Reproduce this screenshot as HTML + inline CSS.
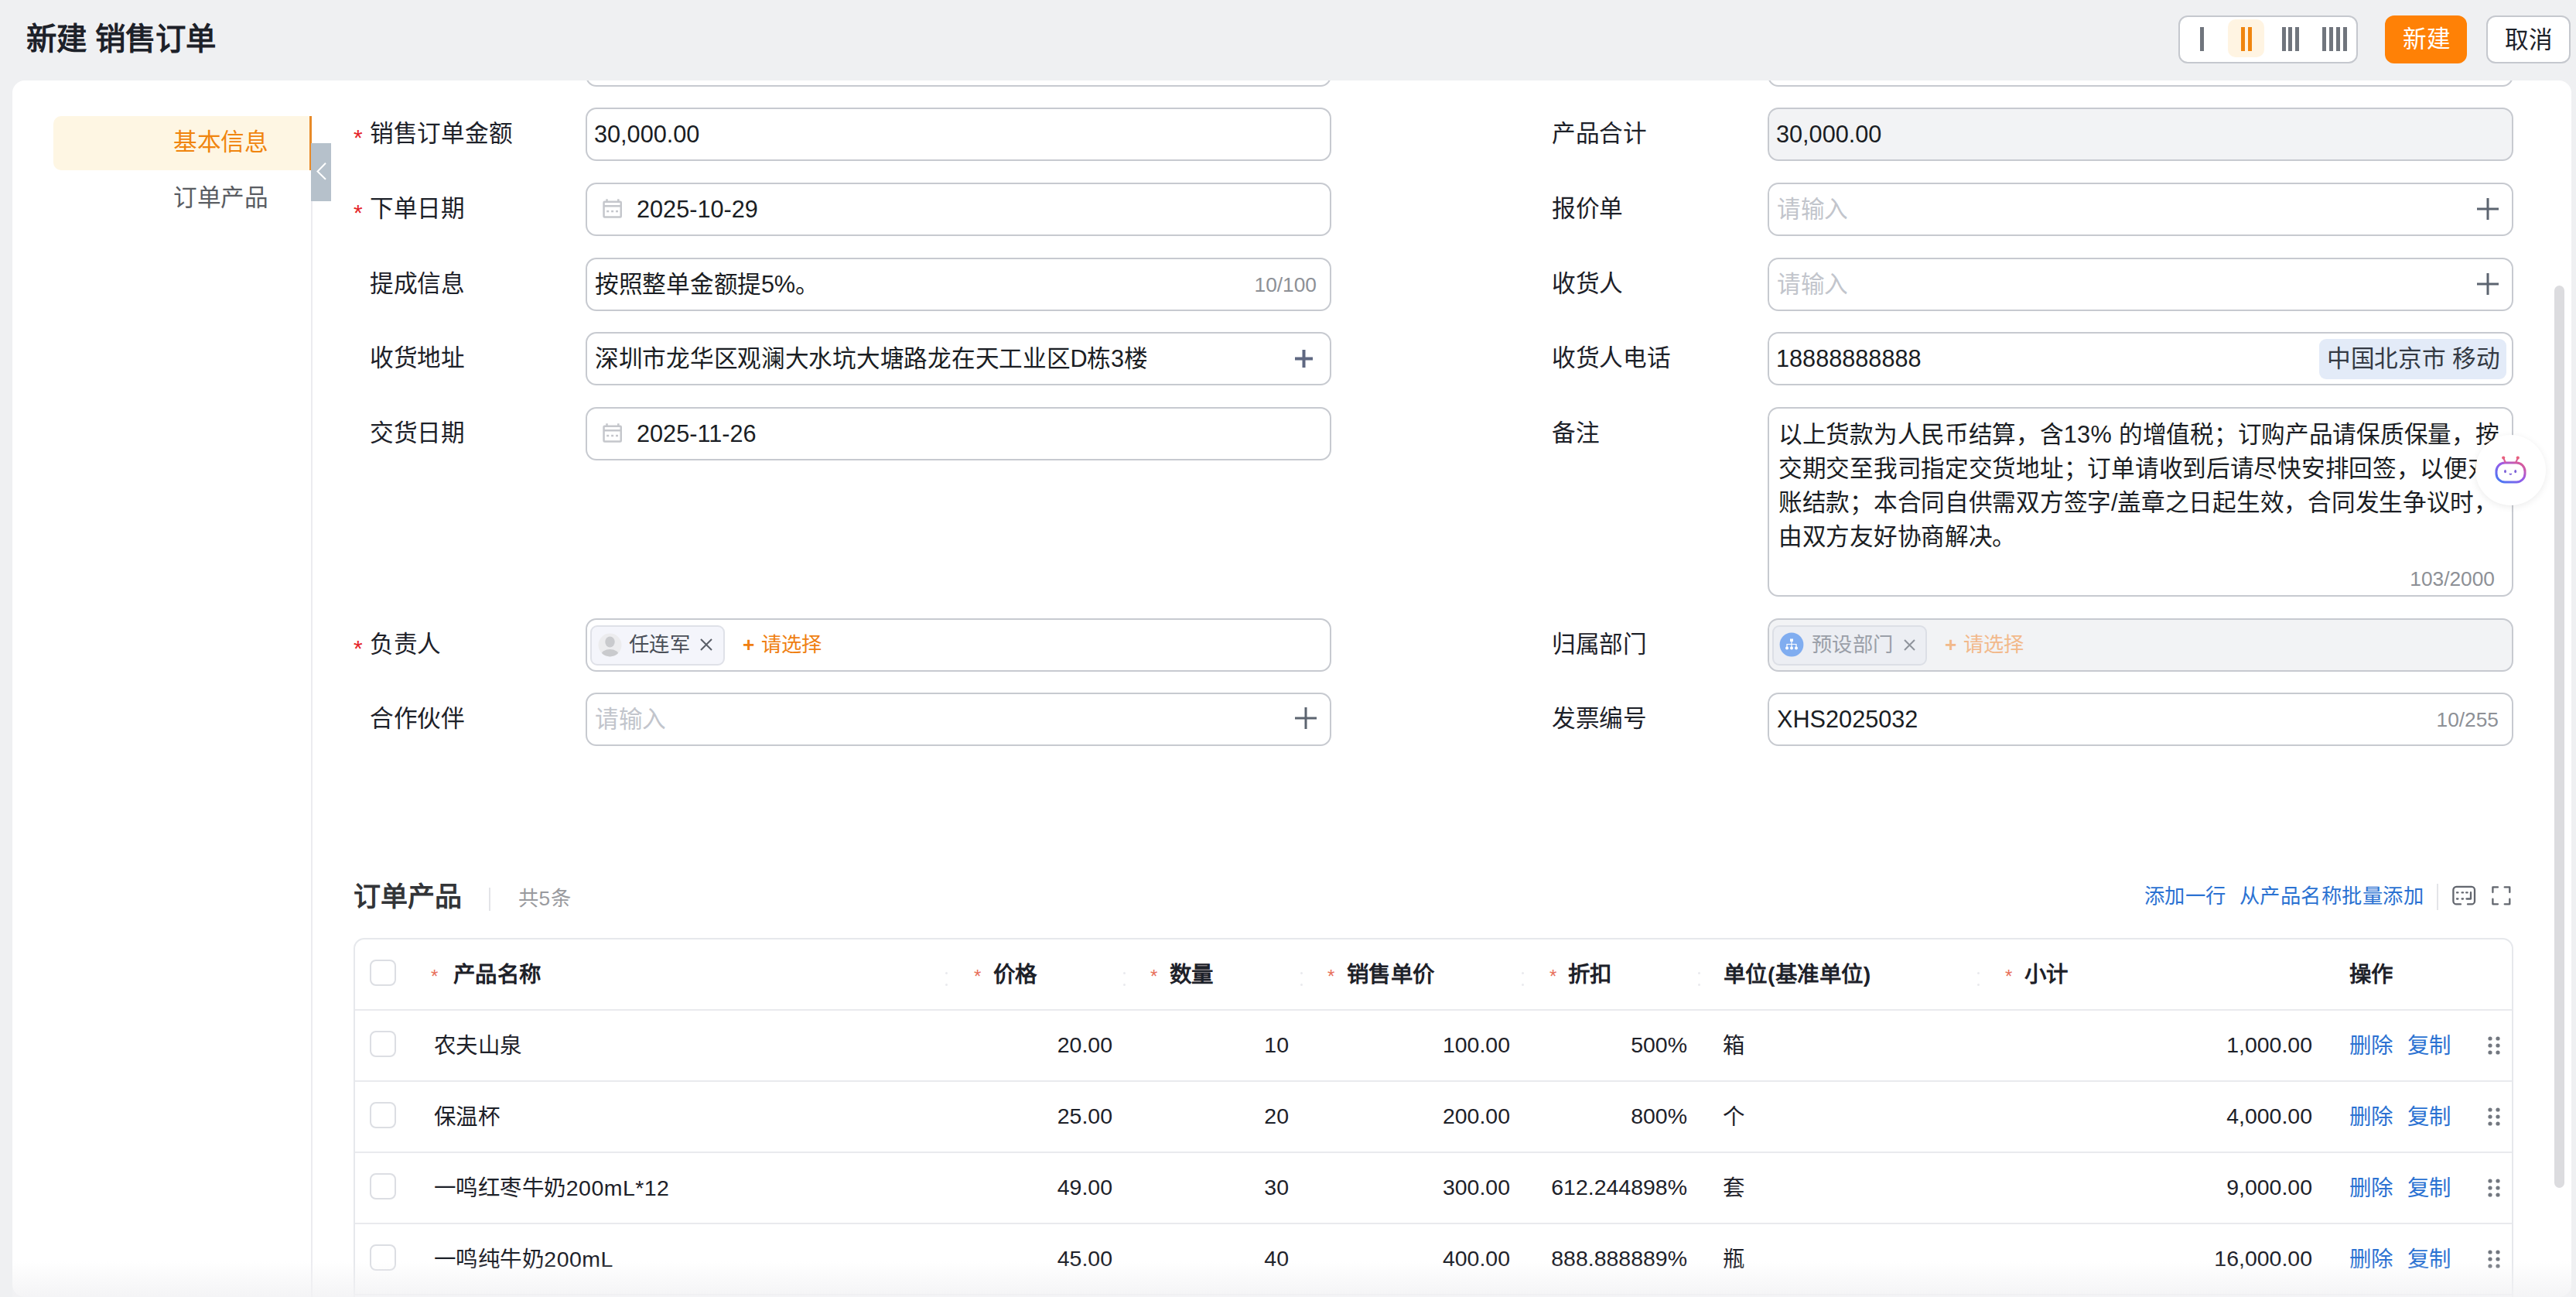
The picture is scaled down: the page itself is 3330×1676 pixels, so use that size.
<!DOCTYPE html>
<html lang="zh-CN"><head><meta charset="utf-8">
<style>
*{box-sizing:border-box;margin:0;padding:0}
html,body{width:3330px;height:1676px;overflow:hidden}
body{position:relative;background:#eff0f2;font-family:"Liberation Sans",sans-serif;color:#1d2129}
.a{position:absolute;white-space:nowrap}
.t{position:absolute;white-space:nowrap;line-height:40px}
.lbl{font-size:30.66px;color:#1d2129}
.itx{font-size:30.66px;color:#1a1d23}
.ph{font-size:30.66px;color:#c2c5cc}
.cnt{font-size:26.3px;color:#8d9096}
.req{font-size:30px;color:#e5262a}
.inp{position:absolute;border:2px solid #c7cad0;border-radius:14px;background:#fff;height:69px}
.dis{background:#f2f3f5}
.tag{position:absolute;border:2px solid #dfe1e8;border-radius:9px;height:52px}
.th{font-size:28.47px;font-weight:bold;color:#1d2129}
.td{font-size:28.47px;color:#1d2129}
.tr{text-align:right}
.star{font-size:24px;color:#e8705a}
.cb{position:absolute;width:34px;height:34px;border:2px solid #dcdee3;border-radius:8px;background:#fff}
.link{color:#2b72d2}
.hl{position:absolute;height:2px;background:#e9eaee}
.c1{letter-spacing:-0.28px}
.c2{letter-spacing:0.47px}
.c3{letter-spacing:0.45px}
.rd{position:absolute;width:3px;height:3px;border-radius:2px;background:#e9eaee}
</style></head><body>

<div class="t" style="left:34px;top:25px;font-size:39.4px;font-weight:bold;line-height:50px;color:#1d2129">新建 销售订单</div>
<div class="a" style="left:2816px;top:20px;width:232px;height:62px;border:2px solid #c5c8ce;border-radius:12px;background:#fff"></div>
<div class="a" style="left:2880px;top:25px;width:47px;height:49px;background:#fff4e2;border-radius:10px"></div>
<div class="a" style="left:2844px;top:35px;width:5px;height:31px;background:#70757d"></div>
<div class="a" style="left:2897px;top:35px;width:5px;height:31px;background:#f0850f"></div>
<div class="a" style="left:2906px;top:35px;width:5px;height:31px;background:#f0850f"></div>
<div class="a" style="left:2950px;top:35px;width:5px;height:31px;background:#70757d"></div>
<div class="a" style="left:2958px;top:35px;width:5px;height:31px;background:#70757d"></div>
<div class="a" style="left:2967px;top:35px;width:5px;height:31px;background:#70757d"></div>
<div class="a" style="left:3002px;top:35px;width:5px;height:31px;background:#70757d"></div>
<div class="a" style="left:3011px;top:35px;width:5px;height:31px;background:#70757d"></div>
<div class="a" style="left:3020px;top:35px;width:5px;height:31px;background:#70757d"></div>
<div class="a" style="left:3029px;top:35px;width:5px;height:31px;background:#70757d"></div>
<div class="a" style="left:3083px;top:20px;width:106px;height:62px;border-radius:12px;background:#ff8106"></div>
<div class="t" style="left:3106px;top:30px;font-size:30.66px;color:#fff;">新建</div>
<div class="a" style="left:3214px;top:20px;width:109px;height:62px;border-radius:12px;background:#fff;border:2px solid #c5c8ce"></div>
<div class="t" style="left:3238px;top:31px;font-size:30.66px;color:#1d2129;">取消</div>
<div class="a" style="left:16px;top:104px;width:3308px;height:1572px;background:#fff;border-radius:16px 16px 16px 16px"></div>
<div class="a" style="left:69px;top:150px;width:331px;height:70px;background:#fef6e3;border-radius:10px 0 0 10px"></div>
<div class="a" style="left:400px;top:150px;width:2.5px;height:70px;background:#e88a28"></div>
<div class="t lbl c1" style="left:224px;top:163px;color:#f0850f">基本信息</div>
<div class="t lbl c1" style="left:224px;top:235px;color:#5a5d63">订单产品</div>
<div class="a" style="left:402px;top:220px;width:2px;height:1456px;background:#ececf0"></div>
<div class="a" style="left:402px;top:185px;width:26px;height:75px;background:#b6c1cb"><svg width="26" height="75" viewBox="0 0 26 75" style="display:block"><path d="M19 25.7 L8.5 36.5 L19 46.8" fill="none" stroke="#fff" stroke-width="2"/></svg></div>
<div class="inp" style="left:757px;top:43px;width:964px;clip-path:inset(61px 0 0 0)"></div>
<div class="inp" style="left:2285px;top:43px;width:964px;clip-path:inset(61px 0 0 0)"></div>
<div class="t lbl c1" style="left:478px;top:152px">销售订单金额</div>
<div class="t req" style="left:457px;top:158px">*</div>
<div class="inp " style="left:757px;top:139px;width:964px;height:69px"></div>
<div class="t itx" style="left:768px;top:153px">30,000.00</div>
<div class="t lbl c1" style="left:478px;top:249px">下单日期</div>
<div class="t req" style="left:457px;top:255px">*</div>
<div class="inp " style="left:757px;top:236px;width:964px;height:69px"></div>
<svg class="a" style="left:778px;top:256px" width="28" height="28" viewBox="0 0 28 28"><g fill="none" stroke="#c5c7cc" stroke-width="2.5"><rect x="2.55" y="4.85" width="22.2" height="19.7" rx="1"/><path d="M2.55 10.2 H24.75 M6.5 1.2 V5 M21.3 1.2 V5"/></g><g fill="#c5c7cc"><rect x="6.2" y="15.8" width="3" height="2.5"/><rect x="12.1" y="15.8" width="3" height="2.5"/><rect x="18" y="15.8" width="3" height="2.5"/></g></svg>
<div class="t itx" style="left:823px;top:250px">2025-10-29</div>
<div class="t lbl c1" style="left:478px;top:346px">提成信息</div>
<div class="inp " style="left:757px;top:333px;width:964px;height:69px"></div>
<div class="t itx c1" style="left:769px;top:347px">按照整单金额提5%。</div>
<div class="t cnt tr" style="left:1500px;width:202px;top:348px">10/100</div>
<div class="t lbl c1" style="left:478px;top:442px">收货地址</div>
<div class="inp " style="left:757px;top:429px;width:964px;height:69px"></div>
<div class="t itx c1" style="left:769px;top:443px">深圳市龙华区观澜大水坑大塘路龙在天工业区D栋3楼</div>
<svg class="a" style="left:1674px;top:451.5px" width="23" height="23" viewBox="0 0 23 23"><path d="M11.5 0 V23 M0 11.5 H23" stroke="#5f6881" stroke-width="4" fill="none"/></svg>
<div class="t lbl c1" style="left:478px;top:539px">交货日期</div>
<div class="inp " style="left:757px;top:526px;width:964px;height:69px"></div>
<svg class="a" style="left:778px;top:546px" width="28" height="28" viewBox="0 0 28 28"><g fill="none" stroke="#c5c7cc" stroke-width="2.5"><rect x="2.55" y="4.85" width="22.2" height="19.7" rx="1"/><path d="M2.55 10.2 H24.75 M6.5 1.2 V5 M21.3 1.2 V5"/></g><g fill="#c5c7cc"><rect x="6.2" y="15.8" width="3" height="2.5"/><rect x="12.1" y="15.8" width="3" height="2.5"/><rect x="18" y="15.8" width="3" height="2.5"/></g></svg>
<div class="t itx" style="left:823px;top:540px">2025-11-26</div>
<div class="t lbl c1" style="left:478px;top:812px">负责人</div>
<div class="t req" style="left:457px;top:818px">*</div>
<div class="inp " style="left:757px;top:799px;width:964px;height:69px"></div>
<div class="tag" style="left:763px;top:808px;width:174px;background:#f4f5fb;border-color:#dfe1e8"></div>
<svg class="a" style="left:773px;top:818px" width="31" height="31" viewBox="0 0 31 31"><defs><clipPath id="av"><circle cx="15.5" cy="15.5" r="15"/></clipPath></defs><circle cx="15.5" cy="15.5" r="15" fill="#ececee"/><g clip-path="url(#av)" fill="#c9cacd"><ellipse cx="15.5" cy="11.5" rx="6.2" ry="7"/><ellipse cx="15.5" cy="29" rx="11.5" ry="8"/></g></svg>
<div class="t c3" style="left:813px;top:813px;font-size:26.3px;color:#4a4f58">任连军</div>
<svg class="a" style="left:905px;top:825px" width="16" height="16" viewBox="0 0 16 16"><path d="M1 1 L15 15 M15 1 L1 15" stroke="#5a5f68" stroke-width="2"/></svg>
<div class="t c3" style="left:960px;top:813px;font-size:26.3px;color:#ef7f12"><b style="font-weight:bold">+</b> 请选择</div>
<div class="t lbl c1" style="left:478px;top:908px">合作伙伴</div>
<div class="inp " style="left:757px;top:895px;width:964px;height:69px"></div>
<div class="t ph c1" style="left:769px;top:909px">请输入</div>
<svg class="a" style="left:1674px;top:914px" width="28" height="28" viewBox="0 0 28 28"><path d="M14 0 V28 M0 14 H28" stroke="#5c6470" stroke-width="3" fill="none"/></svg>
<div class="t lbl c1" style="left:2006px;top:152px">产品合计</div>
<div class="inp dis" style="left:2285px;top:139px;width:964px;height:69px"></div>
<div class="t itx" style="left:2296px;top:153px">30,000.00</div>
<div class="t lbl c1" style="left:2006px;top:249px">报价单</div>
<div class="inp " style="left:2285px;top:236px;width:964px;height:69px"></div>
<div class="t ph c1" style="left:2297px;top:250px">请输入</div>
<svg class="a" style="left:3202px;top:255.5px" width="28" height="28" viewBox="0 0 28 28"><path d="M14 0 V28 M0 14 H28" stroke="#5c6470" stroke-width="3" fill="none"/></svg>
<div class="t lbl c1" style="left:2006px;top:346px">收货人</div>
<div class="inp " style="left:2285px;top:333px;width:964px;height:69px"></div>
<div class="t ph c1" style="left:2297px;top:347px">请输入</div>
<svg class="a" style="left:3202px;top:352.5px" width="28" height="28" viewBox="0 0 28 28"><path d="M14 0 V28 M0 14 H28" stroke="#5c6470" stroke-width="3" fill="none"/></svg>
<div class="t lbl c1" style="left:2006px;top:442px">收货人电话</div>
<div class="inp " style="left:2285px;top:429px;width:964px;height:69px"></div>
<div class="t itx" style="left:2296px;top:443px">18888888888</div>
<div class="a" style="left:2998px;top:438px;width:242px;height:52px;border-radius:9px;background:#e3ebf8"></div>
<div class="t lbl c1" style="left:3008px;top:443px;color:#343a44">中国北京市 移动</div>
<div class="t lbl c1" style="left:2006px;top:539px">备注</div>
<div class="inp " style="left:2285px;top:526px;width:964px;height:245px"></div>
<div class="a c1" style="left:2299px;top:539px;font-size:30.66px;line-height:44px;color:#1a1d23">以上货款为人民币结算，含<span style="letter-spacing:0.35px">13% </span>的增值税；订购产品请保质保量，按<br>交期交至我司指定交货地址；订单请收到后请尽快安排回签，以便对<br>账结款；本合同自供需双方签字/盖章之日起生效，合同发生争议时，<br>由双方友好协商解决。</div>
<div class="t cnt tr" style="left:3002px;width:223px;top:728px">103/2000</div>
<div class="t lbl c1" style="left:2006px;top:812px">归属部门</div>
<div class="inp dis" style="left:2285px;top:799px;width:964px;height:69px"></div>
<div class="tag" style="left:2291px;top:808px;width:200px;background:#eceef3;border-color:#dcdfe6"></div>
<svg class="a" style="left:2300px;top:817px" width="32" height="32" viewBox="0 0 32 32"><circle cx="16" cy="16" r="15.4" fill="#80adf0"/><rect x="14" y="8.5" width="4" height="3.5" fill="#fff"/><path d="M16 12 V15.5 M10 19 V15.5 H22 V19 M16 15.5 V19" stroke="#fff" stroke-width="1.2" fill="none"/><circle cx="10" cy="20.5" r="2" fill="#fff"/><circle cx="16" cy="20.5" r="2" fill="#fff"/><circle cx="22" cy="20.5" r="2" fill="#fff"/></svg>
<div class="t c3" style="left:2342px;top:813px;font-size:26.3px;color:#9a9fa8">预设部门</div>
<svg class="a" style="left:2461px;top:826px" width="15" height="15" viewBox="0 0 15 15"><path d="M1 1 L14 14 M14 1 L1 14" stroke="#8f949c" stroke-width="2"/></svg>
<div class="t c3" style="left:2514px;top:813px;font-size:26.3px;color:#f2b98b"><b style="font-weight:bold">+</b> 请选择</div>
<div class="t lbl c1" style="left:2006px;top:908px">发票编号</div>
<div class="inp " style="left:2285px;top:895px;width:964px;height:69px"></div>
<div class="t itx" style="left:2297px;top:909px">XHS2025032</div>
<div class="t cnt tr" style="left:3000px;width:230px;top:910px">10/255</div>
<div class="a" style="left:3200px;top:562px;width:91px;height:91px;border-radius:50%;background:#fff;box-shadow:0 2px 10px rgba(0,0,0,.08)"></div>
<svg class="a" style="left:3224px;top:586px" width="44" height="40" viewBox="0 0 44 40"><defs><linearGradient id="bg" x1="0" y1="1" x2="1" y2="0"><stop offset="0" stop-color="#3d7bf5"/><stop offset=".55" stop-color="#9b5be8"/><stop offset="1" stop-color="#e65a8a"/></linearGradient></defs><rect x="3" y="12" width="37" height="25" rx="11" fill="none" stroke="url(#bg)" stroke-width="3"/><path d="M15 12 L12.5 6.5 M28 12 L30.5 6.5" stroke="#d85f9a" stroke-width="2"/><circle cx="12.2" cy="5.6" r="2.1" fill="#e8607e"/><circle cx="30.8" cy="5.6" r="2.1" fill="#e8607e"/><ellipse cx="14.5" cy="23.2" rx="1.4" ry="2.1" fill="#7b5fd8"/><ellipse cx="27.7" cy="23.2" rx="1.4" ry="2.1" fill="#7b5fd8"/><path d="M20 26 Q21.4 27.8 22.8 26" stroke="#7b5fd8" stroke-width="1.6" fill="none"/></svg>
<div class="a" style="left:3302px;top:369px;width:13px;height:1166px;border-radius:7px;background:#dcdcdf"></div>
<div class="t" style="left:457px;top:1137px;font-size:35px;font-weight:bold;line-height:44px;color:#333538">订单产品</div>
<div class="a" style="left:632px;top:1147px;width:2px;height:30px;background:#e3e4e8"></div>
<div class="t c3" style="left:670px;top:1141px;font-size:26.3px;color:#999a9e">共5条</div>
<div class="t link c3" style="left:2772px;top:1138px;font-size:26.3px">添加一行</div>
<div class="t link c3" style="left:2895px;top:1138px;font-size:26.3px">从产品名称批量添加</div>
<div class="a" style="left:3150px;top:1142px;width:2px;height:34px;background:#e3e4e8"></div>
<svg class="a" style="left:3168px;top:1142px" width="34" height="30" viewBox="0 0 34 30"><g fill="none" stroke="#62666e" stroke-width="2.3" stroke-linecap="round" stroke-linejoin="round"><path d="M13 26.4 H7.4 A4 4 0 0 1 3.4 22.4 V7.8 A4 4 0 0 1 7.4 3.8 H27 A4 4 0 0 1 31 7.8 V22.4 A4 4 0 0 1 27 26.4 H22"/><path d="M8 11.4 H9.4 M14.6 11.4 H16 M20.2 11.4 H21.6 M8 19.5 H9.4 M14.6 19.5 H16 M20.5 19.5 H26 V11.2"/></g></svg>
<svg class="a" style="left:3218px;top:1142px" width="30" height="30" viewBox="0 0 30 30"><path d="M4.4 11 V4.4 H11 M19.7 4.4 H26.3 V11 M26.3 19.7 V26.3 H19.7 M11 26.3 H4.4 V19.7" fill="none" stroke="#62666e" stroke-width="2.3" stroke-linecap="round" stroke-linejoin="round"/></svg>
<div class="a" style="left:457px;top:1212px;width:2792px;height:600px;border:2px solid #e6e8ec;border-radius:14px;background:#fff"></div>
<div class="hl" style="left:459px;top:1304px;width:2788px"></div>
<div class="hl" style="left:459px;top:1396px;width:2788px"></div>
<div class="hl" style="left:459px;top:1488px;width:2788px"></div>
<div class="hl" style="left:459px;top:1580px;width:2788px"></div>
<div class="hl" style="left:459px;top:1672px;width:2788px"></div>
<div class="cb" style="left:478px;top:1240px"></div>
<div class="t star" style="left:557px;top:1242px">*</div>
<div class="t th c2" style="left:586px;top:1239px">产品名称</div>
<div class="t star" style="left:1259px;top:1242px">*</div>
<div class="t th c2" style="left:1284px;top:1239px">价格</div>
<div class="t star" style="left:1487px;top:1242px">*</div>
<div class="t th c2" style="left:1512px;top:1239px">数量</div>
<div class="t star" style="left:1716px;top:1242px">*</div>
<div class="t th c2" style="left:1741px;top:1239px">销售单价</div>
<div class="t star" style="left:2003px;top:1242px">*</div>
<div class="t th c2" style="left:2027px;top:1239px">折扣</div>
<div class="t th c2" style="left:2228px;top:1239px">单位(基准单位)</div>
<div class="t star" style="left:2592px;top:1242px">*</div>
<div class="t th c2" style="left:2617px;top:1239px">小计</div>
<div class="t th c2" style="left:3037px;top:1239px">操作</div>
<div class="rd" style="left:1222px;top:1256px"></div><div class="rd" style="left:1222px;top:1271px"></div>
<div class="rd" style="left:1452px;top:1256px"></div><div class="rd" style="left:1452px;top:1271px"></div>
<div class="rd" style="left:1681px;top:1256px"></div><div class="rd" style="left:1681px;top:1271px"></div>
<div class="rd" style="left:1967px;top:1256px"></div><div class="rd" style="left:1967px;top:1271px"></div>
<div class="rd" style="left:2195px;top:1256px"></div><div class="rd" style="left:2195px;top:1271px"></div>
<div class="rd" style="left:2556px;top:1256px"></div><div class="rd" style="left:2556px;top:1271px"></div>
<div class="cb" style="left:478px;top:1332px"></div>
<div class="t td c2" style="left:561px;top:1331px">农夫山泉</div>
<div class="t td tr" style="left:1138px;width:300px;top:1330px">20.00</div>
<div class="t td tr" style="left:1366px;width:300px;top:1330px">10</div>
<div class="t td tr" style="left:1652px;width:300px;top:1330px">100.00</div>
<div class="t td tr" style="left:1881px;width:300px;top:1330px">500%</div>
<div class="t td tr" style="left:2689px;width:300px;top:1330px">1,000.00</div>
<div class="t td c2" style="left:2227px;top:1331px">箱</div>
<div class="t td link c2" style="left:3037px;top:1331px">删除</div>
<div class="t td link c2" style="left:3112px;top:1331px">复制</div>
<svg class="a" style="left:3216px;top:1339px" width="16" height="24" viewBox="0 0 16 24"><g fill="#72777f"><circle cx="3" cy="3" r="2.6"/><circle cx="13" cy="3" r="2.6"/><circle cx="3" cy="12" r="2.6"/><circle cx="13" cy="12" r="2.6"/><circle cx="3" cy="21" r="2.6"/><circle cx="13" cy="21" r="2.6"/></g></svg>
<div class="cb" style="left:478px;top:1424px"></div>
<div class="t td c2" style="left:561px;top:1423px">保温杯</div>
<div class="t td tr" style="left:1138px;width:300px;top:1422px">25.00</div>
<div class="t td tr" style="left:1366px;width:300px;top:1422px">20</div>
<div class="t td tr" style="left:1652px;width:300px;top:1422px">200.00</div>
<div class="t td tr" style="left:1881px;width:300px;top:1422px">800%</div>
<div class="t td tr" style="left:2689px;width:300px;top:1422px">4,000.00</div>
<div class="t td c2" style="left:2227px;top:1423px">个</div>
<div class="t td link c2" style="left:3037px;top:1423px">删除</div>
<div class="t td link c2" style="left:3112px;top:1423px">复制</div>
<svg class="a" style="left:3216px;top:1431px" width="16" height="24" viewBox="0 0 16 24"><g fill="#72777f"><circle cx="3" cy="3" r="2.6"/><circle cx="13" cy="3" r="2.6"/><circle cx="3" cy="12" r="2.6"/><circle cx="13" cy="12" r="2.6"/><circle cx="3" cy="21" r="2.6"/><circle cx="13" cy="21" r="2.6"/></g></svg>
<div class="cb" style="left:478px;top:1516px"></div>
<div class="t td c2" style="left:561px;top:1515px">一鸣红枣牛奶200mL*12</div>
<div class="t td tr" style="left:1138px;width:300px;top:1514px">49.00</div>
<div class="t td tr" style="left:1366px;width:300px;top:1514px">30</div>
<div class="t td tr" style="left:1652px;width:300px;top:1514px">300.00</div>
<div class="t td tr" style="left:1881px;width:300px;top:1514px">612.244898%</div>
<div class="t td tr" style="left:2689px;width:300px;top:1514px">9,000.00</div>
<div class="t td c2" style="left:2227px;top:1515px">套</div>
<div class="t td link c2" style="left:3037px;top:1515px">删除</div>
<div class="t td link c2" style="left:3112px;top:1515px">复制</div>
<svg class="a" style="left:3216px;top:1523px" width="16" height="24" viewBox="0 0 16 24"><g fill="#72777f"><circle cx="3" cy="3" r="2.6"/><circle cx="13" cy="3" r="2.6"/><circle cx="3" cy="12" r="2.6"/><circle cx="13" cy="12" r="2.6"/><circle cx="3" cy="21" r="2.6"/><circle cx="13" cy="21" r="2.6"/></g></svg>
<div class="cb" style="left:478px;top:1608px"></div>
<div class="t td c2" style="left:561px;top:1607px">一鸣纯牛奶200mL</div>
<div class="t td tr" style="left:1138px;width:300px;top:1606px">45.00</div>
<div class="t td tr" style="left:1366px;width:300px;top:1606px">40</div>
<div class="t td tr" style="left:1652px;width:300px;top:1606px">400.00</div>
<div class="t td tr" style="left:1881px;width:300px;top:1606px">888.888889%</div>
<div class="t td tr" style="left:2689px;width:300px;top:1606px">16,000.00</div>
<div class="t td c2" style="left:2227px;top:1607px">瓶</div>
<div class="t td link c2" style="left:3037px;top:1607px">删除</div>
<div class="t td link c2" style="left:3112px;top:1607px">复制</div>
<svg class="a" style="left:3216px;top:1615px" width="16" height="24" viewBox="0 0 16 24"><g fill="#72777f"><circle cx="3" cy="3" r="2.6"/><circle cx="13" cy="3" r="2.6"/><circle cx="3" cy="12" r="2.6"/><circle cx="13" cy="12" r="2.6"/><circle cx="3" cy="21" r="2.6"/><circle cx="13" cy="21" r="2.6"/></g></svg>
<div class="a" style="left:16px;top:1630px;width:3308px;height:46px;background:linear-gradient(to bottom,rgba(242,242,244,0),rgba(242,242,244,.85))"></div>
</body></html>
